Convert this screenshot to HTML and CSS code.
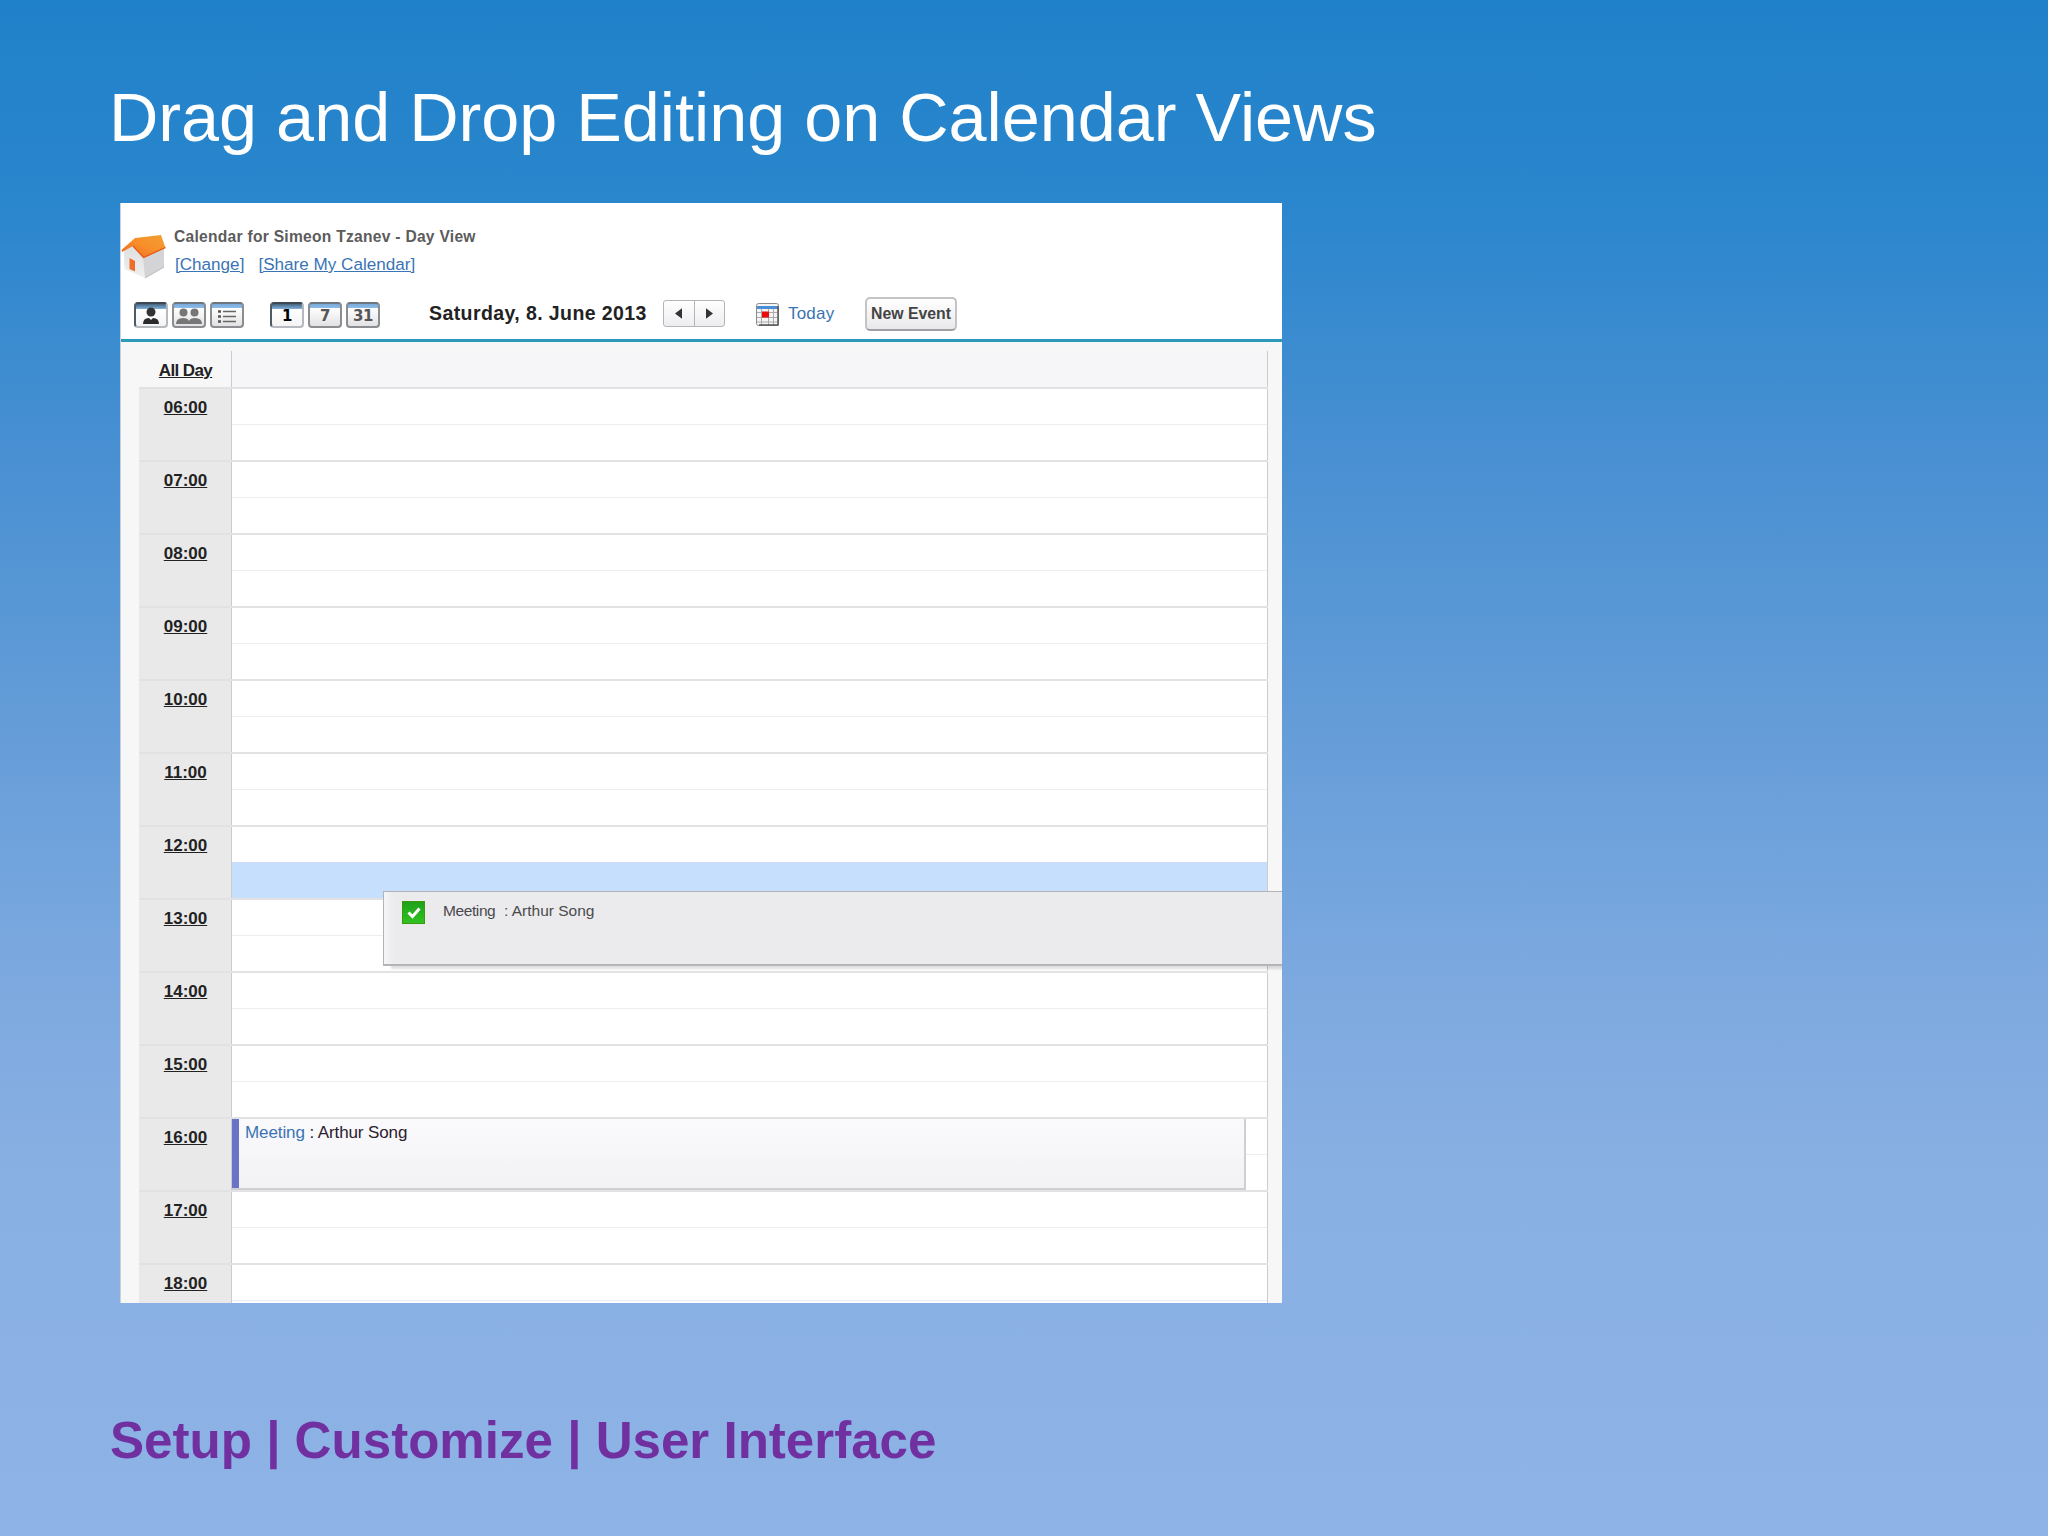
FILE: index.html
```
<!doctype html>
<html>
    <head>
        <meta charset="utf-8">
        <title>Drag and Drop Editing on Calendar Views</title>
        <link rel="stylesheet" href="styles.css">
    </head>
    <body>
        <h1>Drag and Drop Editing on Calendar Views</h1>
        <div class="calendar">
            <div class="header">
                <svg class="house" width="46" height="46" viewBox="0 0 46 46">
                    <defs>
                        <linearGradient id="roof" x1="0" y1="1" x2="1" y2="0">
                            <stop offset="0" stop-color="#e9641f"/>
                            <stop offset=".5" stop-color="#f88d2a"/>
                            <stop offset="1" stop-color="#f0a030"/>
                        </linearGradient>
                        <linearGradient id="wall" x1="0" y1="0" x2="0" y2="1">
                            <stop offset="0" stop-color="#dcdcdd"/>
                            <stop offset="1" stop-color="#f0f0f0"/>
                        </linearGradient>
                    </defs>
                    <path d="M3 17L12 8L24 24V45L3.500 36Z" fill="url(#wall)"/>
                    <path d="M22 24L43 15L43 34L24 45Z" fill="#d4d4d6"/>
                    <path d="M24 45L43 34" stroke="#b9b9bb"/>
                    <path d="M8.500 25L14 28V38.500L8.500 36Z" fill="#ee6d2b"/>
                    <path d="M.5 17L14 5L40 2L44.500 15L22.500 25L12 13L1 19Z" fill="url(#roof)"/>
                    <path d="M12 13L22.500 24.500L44.500 14.500" fill="none" stroke="#e55a1a" stroke-width="1.300"/>
                </svg>
                <div class="owner">
                    <h2>Calendar for Simeon Tzanev - Day View</h2>
                    <div class="links"><a href="#">[Change]</a><a href="#">[Share My Calendar]</a></div>
                </div>
            </div>
            <div class="toolbar">
                <div class="icons">
                    <span class="icon active">
                        <svg width="30" height="22" viewBox="0 0 30 22"><circle cx="15" cy="8" r="4.500" fill="#333"/><path d="M7 20Q7 14 13 14L15 16L17 14Q23 14 23 20Z" fill="#2b2b2b"/></svg>
                    </span>
                    <span class="icon">
                        <svg width="30" height="22" viewBox="0 0 30 22"><g fill="#777"><circle cx="9.500" cy="8.500" r="4"/><circle cx="20.500" cy="8.500" r="4"/><path d="M2 20Q2 14 9 14Q14 14 15 17Q16 14 21 14Q28 14 28 20Z"/></g></svg>
                    </span>
                    <span class="icon">
                        <svg width="30" height="22" viewBox="0 0 30 22"><path d="M6 7.500h3M6 12.500h3M6 17.500h3" stroke="#555" stroke-width="2.500"/><path d="M11 7.500h13M11 12.500h13M11 17.500h13" stroke="#666" stroke-width="1.500"/></svg>
                    </span>
                </div>
                <div class="icons">
                    <span class="icon active">1</span>
                    <span class="icon">7</span>
                    <span class="icon">31</span>
                </div>
                <span class="date">Saturday, 8. June 2013</span>
                <div class="pager">
                    <span><svg width="7" height="11" viewBox="0 0 8 12"><path d="M8 0V12L0 6Z" fill="#333"/></svg></span>
                    <span><svg width="7" height="11" viewBox="0 0 8 12"><path d="M0 0V12L8 6Z" fill="#333"/></svg></span>
                </div>
                <a class="today" href="#">
                    <svg width="23" height="23" viewBox="0 0 23 23">
                        <rect x=".5" y=".5" width="22" height="22" rx="2" fill="#f4f4f4" stroke="#8a8a8a"/>
                        <path d="M1 4.500H22" stroke="#4d8fd6" stroke-width="3"/>
                        <path d="M1 9.500H21M1 14.500H21M1 19H21M5.500 6V22M12.500 6V22M17.500 6V22" stroke="#aaa"/>
                        <path d="M22 3V22H3" fill="none" stroke="#555" stroke-width="1.500"/>
                        <rect x="6" y="8.500" width="7" height="6" fill="#e80c0c"/>
                    </svg>
                    <span>Today</span>
                </a>
                <button>New Event</button>
            </div>
            <div class="day">
                <div class="allday"><b>All Day</b><span></span></div>
                <div class="hour"><b>06:00</b><div class="slots"><i></i></div></div>
                <div class="hour"><b>07:00</b><div class="slots"><i></i></div></div>
                <div class="hour"><b>08:00</b><div class="slots"><i></i></div></div>
                <div class="hour"><b>09:00</b><div class="slots"><i></i></div></div>
                <div class="hour"><b>10:00</b><div class="slots"><i></i></div></div>
                <div class="hour"><b>11:00</b><div class="slots"><i></i></div></div>
                <div class="hour"><b>12:00</b><div class="slots drop"><i></i></div></div>
                <div class="hour"><b>13:00</b><div class="slots"><i></i></div></div>
                <div class="hour"><b>14:00</b><div class="slots"><i></i></div></div>
                <div class="hour"><b>15:00</b><div class="slots"><i></i></div></div>
                <div class="hour"><b>16:00</b><div class="slots"><i></i>
                    <div class="event"><a href="#">Meeting</a> : Arthur Song</div>
                </div></div>
                <div class="hour"><b>17:00</b><div class="slots"><i></i></div></div>
                <div class="hour"><b>18:00</b><div class="slots"><i></i></div></div>
            </div>
            <div class="dragged">
                <svg width="23" height="23" viewBox="0 0 23 23">
                    <defs>
                        <linearGradient id="ok" x1="0" y1="0" x2="0" y2="1">
                            <stop offset="0" stop-color="#1ea01a"/>
                            <stop offset="1" stop-color="#2fc322"/>
                        </linearGradient>
                    </defs>
                    <rect x=".5" y=".5" width="22" height="22" fill="url(#ok)" stroke="#3a9a0c"/>
                    <path d="M6.500 11.500L10.500 15.500L17.500 7.500" fill="none" stroke="#fff" stroke-width="3"/>
                </svg>
                <span class="subject">Meeting</span>
                <span>: Arthur Song</span>
            </div>
        </div>
        <p class="path">Setup | Customize | User Interface</p>
    </body>
</html>
```
FILE: styles.css
```
* {
    box-sizing: border-box;
}

body {
    margin: 0;
    height: 1536px;
    padding: 78px 0 0 109px;
    overflow: hidden;
    font-family: "Liberation Sans", Arial, sans-serif;
    background: linear-gradient(#1f81c9 0, #2a86cd 200px, #4990d2 460px, #659dd8 730px, #7ba8df 960px, #89b0e3 1180px, #8eb3e6 1536px);
}

h1 {
    margin: 0;
    height: 125px;
    line-height: 79px;
    font-size: 68.35px;
    font-weight: normal;
    color: #fff;
    white-space: nowrap;
}

a {
    color: #3a74b4;
}

.calendar {
    position: relative;
    width: 1162px;
    height: 1100px;
    margin-left: 11px;
    overflow: hidden;
    background: #fff;
    border-left: 1px solid #c5d3e0;
}

.header {
    display: flex;
    height: 86px;
    padding-top: 24px;
}

.house {
    margin-top: 6px;
}

.owner {
    padding-left: 7px;
}

h2 {
    margin: 0;
    font-size: 15.6px;
    line-height: 20px;
    letter-spacing: .27px;
    color: #5c5c5c;
}

.links {
    display: flex;
    gap: 14px;
    padding-left: 1px;
    margin-top: 8px;
    font-size: 17.1px;
    line-height: 20px;
}

.toolbar {
    display: flex;
    align-items: center;
    height: 53px;
    padding: 0 0 0 13px;
    border-bottom: 3px solid #2e9ab9;
}

.icons {
    display: flex;
    gap: 4px;
    margin: 1px 26px 0 0;
}

.icon {
    width: 34px;
    height: 26px;
    border: 2px solid #8b8d90;
    border-top-color: #6e7680;
    border-radius: 4px;
    background: linear-gradient(#78abdd 0, #8fbce8 4px, #fff 4px, #e2e2e4 100%);
    font: bold 15px/25px "DejaVu Sans", sans-serif;
    letter-spacing: -.5px;
    text-align: center;
    color: #555;
}

.icon svg {
    display: block;
}

.icon.active {
    border-color: #3d4854 #b6babf #b6babf #4e5a66;
    background: linear-gradient(#45647f 0, #82b2dd 5px, #fff 5px, #f4f4f6 100%);
    color: #000;
}

.date {
    width: 234px;
    margin-left: 23px;
    padding-bottom: 2px;
    font-size: 19.5px;
    font-weight: bold;
    letter-spacing: .41px;
    white-space: nowrap;
    color: #222;
}

.pager {
    display: flex;
    width: 62px;
    height: 27px;
    margin-bottom: 1px;
    border: 1px solid #b5b5b8;
    border-radius: 3px;
    background: linear-gradient(#fff, #ededf0);
}

.pager span {
    display: flex;
    flex: 1;
    align-items: center;
    justify-content: center;
}

.pager span + span {
    border-left: 1px solid #b5b5b8;
}

.today {
    display: flex;
    gap: 9px;
    width: 109px;
    margin-left: 31px;
    font-size: 17px;
    line-height: 22px;
    letter-spacing: .2px;
    text-decoration: none;
}

button {
    width: 92px;
    height: 34px;
    padding: 0;
    border: 2px solid #c4c4c7;
    border-bottom-color: #a0a0a4;
    border-radius: 5px;
    background: linear-gradient(#fff, #e9e9eb);
    font: bold 15.8px "Liberation Sans", Arial, sans-serif;
    white-space: nowrap;
    color: #444;
}

.day {
    padding: 9px 14px 0 18px;
    background: #f7f7f8;
}

.day b {
    width: 93px;
    margin-right: -1px;
    padding-top: 7px;
    font-size: 17px;
    line-height: 23px;
    text-align: center;
    text-decoration: underline;
    color: #222;
}

.allday {
    display: flex;
    height: 36px;
}

.allday b {
    padding-top: 8px;
    letter-spacing: -.6px;
}

.allday span {
    flex: 1;
    border: 1px solid #cccbce;
    border-width: 0 1px;
    background: #f6f5f8;
}

.hour {
    display: flex;
    height: 73px;
    border-top: 2px solid #e2e1e4;
}

.hour b {
    background: #e9e9ea;
}

.slots {
    position: relative;
    flex: 1;
    border: 1px solid #cccbce;
    border-width: 0 1px;
    background: #fff;
}

.slots i {
    display: block;
    height: 36px;
    border-bottom: 1px solid #eeeef1;
}

/* second half hour is the drop target */
.slots.drop {
    background: linear-gradient(#fff 35px, #c5dffd 35px);
}

.slots.drop i {
    border-color: #cddafb;
}

.event {
    position: absolute;
    top: 0;
    left: 0;
    width: 1014px;
    height: 71px;
    padding: 3px 0 0 13px;
    border: solid #cfced2;
    border-width: 0 2px 2px 0;
    background: linear-gradient(90deg, #6973c8 7px, transparent 7px), linear-gradient(#faf9fb, #f2f1f4);
    font-size: 17px;
    line-height: 22px;
    letter-spacing: -.1px;
    color: #2b2030;
}

.event a {
    text-decoration: none;
}

.dragged {
    position: absolute;
    top: 688px;
    left: 262px;
    display: flex;
    width: 910px;
    height: 75px;
    padding: 8px 0 0 17px;
    border: 2px solid #b3b4b7;
    border-width: 1px 2px 2px 1px;
    background: linear-gradient(90deg, #f5f5f6, #ebebed 10px);
    box-shadow: 8px 3px 2px rgba(0, 0, 0, .12);
    font-size: 15.5px;
    line-height: 22px;
    color: #4a4a4c;
}

.dragged svg {
    margin: 1px 0 0 1px;
}

.subject {
    width: 61px;
    margin-left: 18px;
    letter-spacing: -.4px;
}

.path {
    margin: 108px 0 0;
    padding-left: 1px;
    font-size: 51.1px;
    line-height: 60px;
    font-weight: bold;
    color: #7030a0;
}
```
